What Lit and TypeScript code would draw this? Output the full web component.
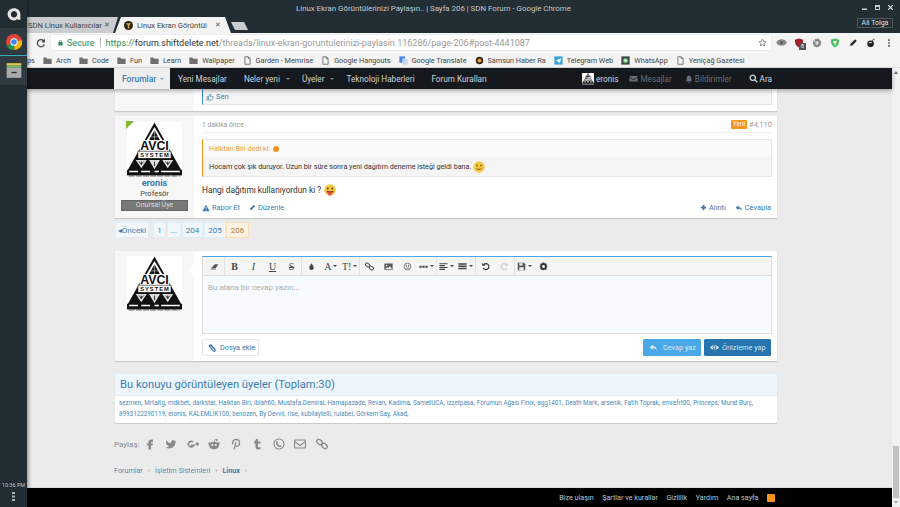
import { LitElement, html, css, svg } from "lit";
import { customElement } from "lit/decorators.js";

const ic = (d: any, size = 10, cls = "", vb = "0 0 24 24") =>
  html`<svg class="ic ${cls}" width=${size} height=${size} viewBox=${vb}>${d}</svg>`;

const I = {
  folder: svg`<path fill="#6f6f6f" d="M1 4h8l2 3h12v14H1z"/>`,
  doc: svg`<path fill="none" stroke="#555" stroke-width="2" d="M5 2h9l5 5v15H5zM14 2v5h5"/>`,
  reply: svg`<path fill="currentColor" d="M10 4 2 11l8 7v-4c5 0 8 1 11 6 0-7-4-11-11-12z"/>`,
  plus: svg`<path fill="currentColor" d="M9 3h6v6h6v6h-6v6H9v-6H3V9h6z"/>`,
  warn: svg`<path fill="currentColor" d="M12 2 23 22H1zM11 9v7h2V9zm0 9v2h2v-2z" fill-rule="evenodd"/>`,
  pen: svg`<path fill="currentColor" d="M3 21l1-6L16 3l5 5L9 20z"/>`,
  thumb: svg`<path fill="none" stroke="currentColor" stroke-width="2" d="M3 11h4v10H3zM7 12l5-9c2 0 3 2 2 4l-1 3h7c2 0 2 2 1 3l-2 7c0 1-1 1-2 1H7"/>`,
  clip: svg`<path fill="none" stroke="currentColor" stroke-width="3" d="M7 4l12 13a3 3 0 0 1-5 4L4 9a2 2 0 0 1 3-3l10 11"/>`,
  eye: svg`<path fill="currentColor" fill-rule="evenodd" d="M0 12C6 4 18 4 24 12 18 20 6 20 0 12zm12-5a5 5 0 1 0 .01 0zm0 2.500a2.500 2.500 0 1 1-.01 0z"/>`,
  mail: svg`<path fill="currentColor" d="M1 5h22v3L12 14 1 8zM1 10l11 6 11-6v10H1z"/>`,
  bell: svg`<path fill="currentColor" d="M12 1c1 0 2 1 2 2 4 1 5 4 5 8 0 4 1 6 3 8H2c2-2 3-4 3-8 0-4 1-7 5-8 0-1 1-2 2-2zM9 20h6c0 2-1 3-3 3s-3-1-3-3z"/>`,
  search: svg`<path fill="none" stroke="currentColor" stroke-width="3.4" d="M10 3a7 7 0 1 0 .01 0zM15 15l7 7"/>`,
  chain: svg`<g fill="none" stroke="currentColor" stroke-width="2.6"><rect x="1" y="4" width="12" height="8" rx="4" transform="rotate(40 7 8)"/><rect x="11" y="12" width="12" height="8" rx="4" transform="rotate(40 17 16)"/></g>`,
};

const share = [
  svg`<path fill="currentColor" d="M15 8h3V3h-4c-3 0-5 2-5 5v3H6v4h3v8h5v-8h3l1-4h-4V9c0-.6.4-1 1-1z"/>`,
  svg`<path fill="currentColor" d="M23 5a9 9 0 0 1-3 1 4.5 4.5 0 0 0-7.9 3v1A10.7 10.7 0 0 1 3 5s-4 8 5 12a11.6 11.6 0 0 1-7 2c9 5 20 0 20-11 0-.3 0-.6-.1-.8A7.7 7.7 0 0 0 23 5z"/>`,
  svg`<path fill="none" stroke="currentColor" stroke-width="3.4" d="M13 8a5.6 5.6 0 1 0 1.6 6.5H9M18 12h7M21.500 8.500v7" transform="translate(-1 0)"/>`,
  svg`<g fill="currentColor"><ellipse cx="12" cy="15" rx="10" ry="7.500"/><circle cx="3" cy="11" r="2.500"/><circle cx="21" cy="11" r="2.500"/><circle cx="18" cy="4" r="2"/></g><path stroke="currentColor" stroke-width="1.500" fill="none" d="M12 8l2-5 4 1"/><circle cx="8.500" cy="14" r="2" fill="#ebebeb"/><circle cx="15.500" cy="14" r="2" fill="#ebebeb"/>`,
  svg`<path fill="none" stroke="currentColor" stroke-width="2.600" d="M6 13C3 8 7 3 12 3s8 3 7 8-5 7-7 5M12 8 8 23"/>`,
  svg`<path fill="currentColor" d="M14 2v5h5v4h-5v6c0 2 2 2 5 1v4c-6 2-10 0-10-4v-7H6V8c2-1 3-3 4-6z"/>`,
  svg`<circle cx="12" cy="12" r="10" fill="none" stroke="currentColor" stroke-width="2.200"/><path fill="currentColor" d="M8 7c1-1 2 0 2 2l-1 1c0 2 2 4 4 5l2-1 2 2c0 2-2 2-3 2-4 0-8-4-8-7 0-2 1-4 2-4z"/>`,
  svg`<g fill="none" stroke="currentColor" stroke-width="2.200"><rect x="1" y="4" width="22" height="16" rx="2"/><path d="M1 7l11 8 11-8"/></g>`,
  I.chain,
];

const avatar = (size: number) => html`<svg class="ava" width=${size} height=${size} viewBox="0 0 100 100">
  <rect width="100" height="100" fill="#fff"/>
  <path d="M50 1 100 90H0z" fill="#111"/>
  <path d="M50 9 66 36H34z" fill="#fff"/>
  <path d="M50 15 60 33H40z" fill="#111"/>
  <path d="M50 15V33M44 27H56" stroke="#fff" stroke-width=".9"/>
  <rect x="23" y="33" width="54" height="21" fill="#fff"/>
  <text x="50" y="51" text-anchor="middle" font-family="Liberation Sans" font-weight="700" font-size="24" textLength="52" lengthAdjust="spacingAndGlyphs" fill="#111">AVCI</text>
  <rect x="20" y="53" width="60" height="13" fill="#fff" stroke="#111"/>
  <text x="50" y="63.500" text-anchor="middle" font-family="Liberation Sans" font-weight="700" font-size="10.500" textLength="52" fill="#111">SYSTEM</text>
  <path d="M16 69H36L26 84zM40 69H60L50 86zM64 69H84L74 84z" fill="#ddd"/>
  <path d="M50 72v8M26 72v6M74 72v6M22 72l4 5 4-5M70 72l4 5 4-5" stroke="#111" stroke-width="1.500" fill="none"/>
  <rect x="0" y="87" width="100" height="10" fill="#111"/>
  <path d="M4 90h16M26 90h16M50 90h8M62 90h34" stroke="#fff" stroke-width="2.500"/>
  <path d="M3 98h94" stroke="#666" stroke-width="2" stroke-dasharray="11 2"/>
</svg>`;

const emoji = (size: number, tongue: boolean) => html`<svg class="ic" width=${size} height=${size} viewBox="0 0 24 24">
  <circle cx="12" cy="12" r="11.500" fill="#f6c742"/>
  ${tongue
    ? svg`<circle cx="7.500" cy="9" r="2" fill="#5a3a12"/><circle cx="16.500" cy="9" r="2" fill="#5a3a12"/><path d="M5 14h14c0 3-3 5-7 5s-7-2-7-5z" fill="#7a3a14"/><path d="M8 15h8v4a4 4 0 0 1-8 0z" fill="#e8484f"/>`
    : svg`<circle cx="8" cy="9" r="1.800" fill="#7a5a1a"/><circle cx="16" cy="9" r="1.800" fill="#7a5a1a"/><path d="M7 15c3 2.500 7 2.500 10 0" fill="none" stroke="#7a5a1a" stroke-width="2"/>`}
</svg>`;

const marks: [string, any, string][] = [
  ["ps", null, "b0"],
  ["Arch", I.folder, "b1"],
  ["Code", I.folder, "b1"],
  ["Fun", I.folder, "b1"],
  ["Learn", I.folder, "b1"],
  ["Wallpaper", I.folder, "b1"],
  ["Garden - Memrise", I.doc, "b1"],
  ["Google Hangouts", I.doc, "b1"],
  ["Google Translate", svg`<rect x="1" y="1" width="15" height="17" fill="#4a86e8"/><rect x="9" y="7" width="14" height="16" fill="#c9d6ee"/>`, "b1"],
  ["Samsun Haber Ra", svg`<circle cx="12" cy="12" r="10" fill="#3b2a1a"/><circle cx="12" cy="12" r="5" fill="#e8a33a"/>`, "b1"],
  ["Telegram Web", svg`<rect x="1" y="1" width="22" height="22" fill="#3aa0d8"/><path d="M5 12l14-6-3 13-4-4-2 2v-4z" fill="#fff"/>`, "b1"],
  ["WhatsApp", svg`<rect x="1" y="1" width="22" height="22" fill="#444"/><circle cx="12" cy="12" r="7" fill="#4cc05c"/><circle cx="12" cy="12" r="3.500" fill="#fff"/>`, "b1"],
  ["Yeniçağ Gazetesi", I.doc, "b1"],
];

const sep = { sep: true } as const;
const gl = (c: string, cls = "", caret = false) => ({ c, cls, caret });
const ig = (svgc: any, caret = false, cls = "") => ({ svgc, caret, cls });
const tb: any[] = [
  ig(svg`<path fill="#555" d="M2 17 13 6h9l-7 11zM2 20h13v1H2z"/>`), sep,
  gl("B", "tb"), gl("I", "ti"), gl("U", "tu"), gl("S", "ts"), sep,
  ig(svg`<path fill="#444" d="M12 3c3 5 6 8 6 12a6 6 0 0 1-12 0c0-4 3-7 6-12z"/>`),
  gl("A", "ta", true), gl("T!", "ta", true), sep,
  ig(I.chain),
  ig(svg`<path fill="#555" d="M1 4h22v17H1z"/><circle cx="7" cy="9" r="2" fill="#f3f3f3"/><path fill="#f3f3f3" d="M3 19l6-6 3 3 4-5 6 8z"/>`),
  ig(svg`<circle cx="12" cy="12" r="9" fill="none" stroke="#777" stroke-width="2.500"/><path stroke="#777" stroke-width="2.500" d="M9 7v6M15 7v6M8 16h8"/>`),
  ig(svg`<path fill="#444" d="M1 10h6v5H1zM9 10h6v5H9zM17 10h6v5h-6z"/>`, true), sep,
  ig(svg`<path fill="#444" d="M1 3h22v3H1zM1 8h15v3H1zM1 13h22v3H1zM1 18h15v3H1z"/>`, true),
  ig(svg`<path fill="#444" d="M1 3h22v4H1zM1 9h22v4H1zM1 15h22v4H1z"/>`, true), sep,
  ig(svg`<path fill="none" stroke="#333" stroke-width="3" d="M7 7a8 8 0 1 1-1 9M3 4l3 5 5-2"/>`),
  ig(svg`<path fill="none" stroke="#ccc" stroke-width="3" d="M17 7a8 8 0 1 0 1 9M21 4l-3 5-5-2"/>`), sep,
  ig(svg`<path fill="#555" d="M2 2h16l4 4v16H2z"/><path fill="#eee" d="M6 3h9v6H6zM6 14h12v7H6z"/>`, true),
  ig(svg`<path fill="#333" fill-rule="evenodd" d="M10 1h4l1 3 3-1 3 3-2 3 3 1v4l-3 1 2 3-3 3-3-2-1 3h-4l-1-3-3 2-3-3 2-3-3-1v-4l3-1-2-3 3-3 3 1zm2 7a4 4 0 1 0 .01 0z"/>`),
];

const row1 = ["sezmen","Mrtaltg","mdkbet","darkstar","Halktan Biri","iblah60","Mustafa.Demiral","Hamapazade","Revan","Kadima","SametUCA","izzetpasa","Forumun Ağası Finix","agg1401","Death Mark","arsenik","Fatih Toprak","emrefrt00","Princeps","Murat Burç"];
const row2 = ["8993122290119","eronis","KALEMLİK100","benozen","By Devvil","rise","kubilaytelli","rulabel","Görkem Say","Akad"];

@customElement("app-root")
export class AppRoot extends LitElement {
  static styles = css`
    :host { display: flex; width: 900px; height: 507px; overflow: hidden; font-family: Roboto, "Noto Sans", sans-serif; background: #ebebeb; color: #333; }
    * { box-sizing: border-box; }
    .ic { display: block; flex: none; }

    .dock { width: 27px; flex: none; background: #222d33; display: flex; flex-direction: column; align-items: stretch; position: relative; z-index: 3; box-shadow: 1px 0 4px rgba(0,0,0,.45); }
    .dlogo { height: 28px; display: flex; align-items: center; justify-content: center; }
    .dchrome { height: 28px; background: #2e3a40; border-bottom: 1px solid #3aa9b8; display: flex; align-items: center; justify-content: center; }
    .dfiles { height: 29px; background: #2e3a40; display: flex; align-items: center; justify-content: center; }
    .dspace { flex: 1; }
    .clock { font-size: 5.500px; color: #c4c9cb; text-align: center; white-space: nowrap; height: 10px; line-height: 10px; }
    .ddots { height: 17px; display: flex; justify-content: center; padding-top: 2px; }

    .win { flex: 1; min-width: 0; display: flex; flex-direction: column; }
    .title { height: 33px; flex: none; background: #232e34; color: #c4c9cb; position: relative; }
    .trow { height: 17px; display: flex; font-size: 7.850px; align-items: center; padding-left: 269px; white-space: nowrap; }
    .wbtns { position: absolute; right: 7px; top: 5px; display: flex; gap: 8px; align-items: center; }
    .user { position: absolute; right: 7px; top: 18px; height: 10px; width: 36px; border: 1px solid #53595d; font-size: 7px; line-height: 8px; text-align: center; color: #dfe2e3; border-radius: 1px; }
    .tabs { height: 16px; display: flex; align-items: flex-end; }
    .tab { height: 16px; display: flex; align-items: center; font-size: 7.600px; white-space: nowrap; }
    .tab1 { width: 92px; background: #c9cdcf; color: #444; padding-left: 1px; clip-path: polygon(0 0, 91px 0, 86px 100%, 0 100%); }
    .tab2 { width: 116px; margin-left: -4px; background: #f4f4f4; color: #444; padding-left: 9px; clip-path: polygon(6px 0, 110px 0, 116px 100%, 0 100%); }
    .x { font-size: 7px; color: #555; margin-left: auto; }
    .tab1 .x { margin-right: 9px; }
    .tab2 .x { margin-right: 10px; }
    .favi { margin-right: 4px; }
    .newtab { width: 17px; height: 8px; margin-bottom: 3px; background: #c9cdcf; clip-path: polygon(0 0, 13px 0, 17px 100%, 4px 100%); }

    .tool { height: 19px; flex: none; background: #f4f4f4; display: flex; align-items: center; padding-left: 9px; }
    .omni { width: 720px; height: 15px; margin-left: 5px; background: #fff; box-shadow: 0 0 1px rgba(0,0,0,.3); border-radius: 1px; display: flex; align-items: center; padding-left: 6px; font-size: 9px; white-space: nowrap; position: relative; }
    .sec { color: #2e8b57; margin-left: 3px; }
    .bar { width: 1px; height: 9px; background: #bbb; margin: 0 5px; }
    .https { color: #2e8b57; }
    .dom { color: #333; }
    .rest { color: #9a9a9a; }
    .star { margin-left: auto; margin-right: 4px; color: #666; }
    .exts { display: flex; align-items: center; margin-left: 1px; }
    .ext { width: 18px; display: flex; justify-content: center; position: relative; }
    .badge8 { position: absolute; left: 9px; top: 5px; width: 7px; height: 7px; background: #555; color: #fff; font-size: 5px; line-height: 7px; text-align: center; }

    .marks { height: 16px; flex: none; background: #f4f4f4; display: flex; align-items: center; font-size: 7.300px; color: #444; white-space: nowrap; overflow: hidden; box-shadow: inset 0 -1px 0 #ddd; }
    .b { display: flex; align-items: center; gap: 4px; }
    .b0 { width: 16px; }
    .b1 { margin-right: 8px; }

    .view { flex: 1; min-height: 0; display: flex; }
    .col { flex: 1; min-width: 0; display: flex; flex-direction: column; }
    .scroll { width: 8px; flex: none; background: #f1f1f1; display: flex; flex-direction: column; align-items: center; }
    .up, .dn { width: 0; height: 0; border-left: 2.500px solid transparent; border-right: 2.500px solid transparent; flex: none; }
    .up { border-bottom: 3px solid #666; margin-top: 3px; }
    .dn { border-top: 3px solid #aaa; margin-bottom: 3px; }
    .track { flex: 1; width: 100%; padding-top: 372px; display: flex; }
    .thumb { width: 6px; margin-left: 1px; height: 52px; background: #c1c1c1; }

    nav { height: 21px; flex: none; background: #15181d; display: flex; align-items: center; font-size: 8.200px; color: #cfd6dc; white-space: nowrap; padding-left: 87px; position: relative; z-index: 2; box-shadow: 0 2px 4px rgba(0,0,0,.3); }
    .fm { height: 21px; width: 56px; background: #eeeeee; color: #3b7cb1; display: flex; align-items: center; padding-left: 8px; font-weight: 500; margin-right: 8px; font-size: 8.500px; }
    .fm i { margin-left: 4px; color: #7aa6c8; }
    .caret { display: inline-block; width: 0; height: 0; border-left: 2.500px solid transparent; border-right: 2.500px solid transparent; border-top: 2.500px solid currentColor; }
    .navc { color: #7a8288; margin-left: 6px; }
    .ni { display: flex; align-items: center; }
    .ni.a { margin-right: 17px; }
    .ni.c { margin-right: 12px; }
    .nr { margin-left: auto; margin-right: 120px; display: flex; align-items: center; }
    .nr .g { color: #66707a; gap: 2px; }
    .nava { margin-right: 2px; }

    .page { flex: 1; min-height: 0; padding-left: 88px; width: 751px; display: flex; flex-direction: column; overflow: hidden; font-size: 8px; }
    .card { background: #fff; width: 662px; display: flex; box-shadow: 0 1px 1px rgba(0,0,0,.15); flex: none; position: relative; }
    .uc { width: 79px; flex: none; background: #f7f7f7; display: flex; flex-direction: column; align-items: center; }
    .mc { flex: 1; min-width: 0; padding: 0 5px 0 8px; }
    .notch::before { content: ""; position: absolute; left: 73px; top: 13px; width: 0; height: 0; border: 6px solid transparent; border-left-width: 0; border-right-color: #fff; }

    .top { height: 22px; }
    .likes { height: 16px; background: #f5f5f5; border: 1px solid #e4e4e4; border-left: 1.500px solid #3b8fd6; border-top: 0; display: flex; align-items: center; gap: 2px; padding: 0 0 0 3px; font-size: 7.500px; color: #3b7cb1; }

    .post { height: 102px; margin-top: 5px; }
    .ava { display: block; }
    .post .uc { padding-top: 6px; position: relative; }
    .online { position: absolute; left: 11px; top: 5px; width: 0; height: 0; border-top: 8px solid #7fb52c; border-right: 8px solid transparent; }
    .uname { color: #3b7cb1; font-weight: 700; font-size: 9.200px; line-height: 11px; }
    .utitle { font-size: 7.500px; line-height: 11px; color: #444; }
    .banner { width: 67px; height: 11px; background: #777; border: 1px solid #666; color: #ddd; font-size: 7px; line-height: 9px; text-align: center; margin-top: 1px; }
    .meta { height: 17px; border-bottom: 1px solid #eee; display: flex; align-items: center; font-size: 6.800px; color: #999; padding-top: 1px; }
    .num { font-size: 7.500px; }
    .new { margin-left: auto; width: 16px; height: 9px; line-height: 9px; background: #f7941d; color: #fff; text-align: center; border-radius: 1px; font-size: 6.500px; margin-right: 2px; }
    .qt { margin-top: 6px; height: 38px; background: #f5f5f5; border: 1px solid #e6e6e6; border-left: 1.500px solid #f7941d; font-size: 7.200px; display: flex; flex-direction: column; }
    .qh { height: 17px; background: #fafafa; color: #f5a03c; display: flex; align-items: center; gap: 3px; padding-left: 6px; }
    .qdot { width: 6px; height: 6px; border-radius: 50%; background: #f7941d; }
    .qb { flex: 1; display: flex; align-items: center; gap: 2px; padding-left: 6px; color: #333; }
    .msg { height: 26px; display: flex; align-items: center; gap: 3px; font-size: 8.300px; color: #333; }
    .acts { display: flex; align-items: center; font-size: 7.400px; color: #3b7cb1; }
    .act { display: flex; align-items: center; gap: 2px; margin-right: 9px; }
    .acts .ml { margin-left: auto; }
    .acts .last { margin-right: 1px; }

    .pager { display: flex; height: 16px; margin-top: 4px; flex: none; font-size: 8px; color: #3b7cb1; }
    .pg { background: #f2f7fc; border: 1px solid #e3edf6; display: flex; align-items: center; justify-content: center; height: 16px; margin-right: 1px; }
    .pg.cur { background: #fdf1e0; border-color: #f8dcb3; color: #b07a3a; margin-left: -1px; }

    .reply { height: 110px; margin-top: 13px; }
    .reply .uc { padding-top: 5px; }
    .editor { margin-top: 5px; height: 78px; border: 1px solid #ddd; border-top: 1.500px solid #4aa7e8; display: flex; flex-direction: column; }
    .etool { height: 19px; background: #f5f5f5; border-bottom: 1px solid #ddd; display: flex; padding-left: 2px; flex: none; }
    .cell { width: 19px; display: flex; align-items: center; justify-content: center; gap: 1.500px; color: #444; font-family: "Liberation Serif", serif; font-size: 10px; }
    .tb { font-weight: 700; }
    .ti { font-style: italic; }
    .tu { text-decoration: underline; }
    .ts { text-decoration: line-through; }
    .esep { width: 1px; background: #e2e2e2; flex: none; }
    .ebody { flex: 1; background: #f7fbff; padding: 7px 5px; font-size: 8px; color: #aaa; }
    .foot { display: flex; margin-top: 5px; }
    .btn { height: 17px; display: flex; align-items: center; font-size: 7.300px; border-radius: 1.500px; }
    .attach { width: 57px; background: #fff; border: 1px solid #e2e2e2; color: #3b7cb1; gap: 3px; padding-left: 5px; }
    .b1a { width: 58px; margin-left: auto; background: #4aa7e8; color: #dcedf9; padding-left: 6px; gap: 5px; }
    .b2a { width: 67px; margin-left: 3px; background: #2574ad; color: #d3e3ef; padding-left: 6px; gap: 3px; margin-right: 1px; }

    .view-card { width: 662px; height: 49px; margin-top: 13px; background: #fff; box-shadow: 0 1px 1px rgba(0,0,0,.15); flex: none; border-radius: 1px; }
    .vh { height: 22px; background: #edf5fd; border-bottom: 1px solid #e2edf6; color: #3b7cb1; font-size: 11.200px; display: flex; align-items: center; padding-left: 5px; white-space: nowrap; }
    .vb { padding: 2px 4px; font-size: 6.300px; line-height: 11px; color: #555; white-space: nowrap; }
    .vrow { display: flex; gap: 2px; }
    .vb span { color: #4a8abb; }

    .sh { display: flex; align-items: center; height: 14px; margin-top: 14px; margin-left: -1px; color: #8a8a8a; font-size: 8px; flex: none; }
    .sh .lbl { margin-right: 1px; width: 24px; }
    .sh .si { width: 21.500px; display: flex; justify-content: center; }
    .crumbs { display: flex; align-items: center; gap: 5px; margin-top: 13px; margin-left: -1px; font-size: 7.200px; color: #5a8db5; height: 12px; flex: none; }
    .crumbs b { color: #3b7cb1; }
    .crumbs i { font-style: normal; color: #999; }

    footer { height: 20px; flex: none; background: #000; border-top: 1px solid #ddd; display: flex; align-items: center; justify-content: flex-end; gap: 8.500px; padding-right: 117px; color: #b9c7d2; font-size: 7.200px; white-space: nowrap; }
    .rss { width: 8px; height: 8px; background: #f7941d; border-radius: 1px; }
  `;

  render() {
    return html`
      <aside class="dock">
        <div class="dlogo">
          <svg class="ic" width="14" height="14" viewBox="0 0 24 24"><path fill="#e8e8e8" fill-rule="evenodd" d="M12 2c6 0 11 4 11 10v10h-5v-2c-2 2-4 3-6 3-6 0-11-5-11-11S6 2 12 2zm0 5a5.500 5.500 0 1 0 .01 0z"/></svg>
        </div>
        <div class="dchrome">
          <svg class="ic" width="16" height="16" viewBox="0 0 24 24"><circle cx="12" cy="12" r="12" fill="#db4437"/><path d="M12 12 1.500 18A12 12 0 0 0 13 24z" fill="#0f9d58"/><path d="M12 12 24 9a12 12 0 0 1-11 15z" fill="#f4b400"/><circle cx="12" cy="12" r="5.500" fill="#fff"/><circle cx="12" cy="12" r="4.200" fill="#4285f4"/></svg>
        </div>
        <div class="dfiles">
          <svg class="ic" width="16" height="17" viewBox="0 0 24 24"><rect x="1" y="1" width="22" height="3" fill="#e9c94a"/><rect x="1" y="4" width="22" height="4" fill="#7cb86a"/><rect x="1" y="8" width="22" height="15" fill="#aaa"/><rect x="8" y="14" width="8" height="2" fill="#333"/></svg>
        </div>
        <div class="dspace"></div>
        <div class="clock">10:36 PM</div>
        <div class="ddots"><svg class="ic" width="3" height="9" viewBox="0 0 3 9"><path fill="#a8aeb1" d="M0 0h3v2H0zM0 3.500h3v2H0zM0 7h3v2H0z"/></svg></div>
      </aside>

      <div class="win">
        <div class="title">
          <div class="trow">Linux Ekran Görüntülerinizi Paylaşın.. | Sayfa 206 | SDN Forum - Google Chrome</div>
          <div class="wbtns">
            <svg class="ic" width="5" height="5" viewBox="0 0 5 5"><rect y="3.500" width="5" height="1.500" fill="#ccc"/></svg>
            <svg class="ic" width="5" height="5" viewBox="0 0 5 5"><path fill="#ccc" d="M0 0h5v5H0zM1 2v2h3V2z" fill-rule="evenodd"/></svg>
            <svg class="ic" width="5" height="5" viewBox="0 0 5 5"><path stroke="#ddd" stroke-width="1.200" d="M0 0l5 5M5 0 0 5"/></svg>
          </div>
          <div class="user">Ali Tolga</div>
          <div class="tabs">
            <div class="tab tab1"><span>SDN Linux Kullanıcılar</span><span class="x">✕</span></div>
            <div class="tab tab2">
              <svg class="ic favi" width="9" height="9" viewBox="0 0 24 24"><circle cx="12" cy="12" r="12" fill="#2b2416"/><path d="M5 6h14l-5 5v9h-4v-9z" fill="#d9a93a"/></svg>
              <span>Linux Ekran Görüntül</span><span class="x">✕</span>
            </div>
            <div class="newtab"></div>
          </div>
        </div>

        <div class="tool">
          ${ic(svg`<path fill="none" stroke="#444" stroke-width="3" d="M19 8a8.500 8.500 0 1 0 1 7M20 3v6h-6"/>`, 10)}
          <div class="omni">
            ${ic(svg`<path fill="#2e8b57" d="M5 10h14v12H5zM8 10V7a4 4 0 0 1 8 0v3h-2V7a2 2 0 0 0-4 0v3z"/>`, 7)}
            <span class="sec">Secure</span><span class="bar"></span>
            <span class="https">https://</span><span class="dom">forum.shiftdelete.net</span><span class="rest">/threads/linux-ekran-goruntulerinizi-paylasin.116286/page-206#post-4441087</span>
            <span class="star">${ic(svg`<path fill="none" stroke="currentColor" stroke-width="2" d="M12 3l3 6 6 1-4.500 4.500 1 6.500-5.500-3-5.500 3 1-6.500L3 10l6-1z"/>`, 9)}</span>
          </div>
          <div class="exts">
            <div class="ext">${ic(svg`<ellipse cx="12" cy="12" rx="11" ry="7" fill="#888"/><circle cx="12" cy="12" r="3" fill="#555"/>`, 11)}</div>
            <div class="ext">${ic(svg`<path d="M12 1 22 4c0 10-3 15-10 19C5 19 2 14 2 4z" fill="#a3202a"/>`, 10)}<span class="badge8">8</span></div>
            <div class="ext">${ic(svg`<circle cx="12" cy="12" r="10" fill="#888"/><circle cx="12" cy="12" r="4" fill="#ddd"/><circle cx="6" cy="8" r="2" fill="#ddd"/>`, 10)}</div>
            <div class="ext">${ic(svg`<path d="M12 1 22 4c0 10-3 15-10 19C5 19 2 14 2 4z" fill="#4cc05c"/><path d="M8 7h8v4l-3 2v4h-2v-4L8 11z" fill="#fff"/>`, 10)}</div>
            <div class="ext">${ic(svg`<path fill="#333" d="M3 21l1-6L16 3l5 5L9 20z"/>`, 9)}</div>
            <div class="ext">${ic(svg`<circle cx="11" cy="14" r="8" fill="#222"/><path d="M14 7l4-4 3 2" fill="none" stroke="#222" stroke-width="2"/><path d="M7 11h7" stroke="#fff" stroke-width="2"/>`, 10)}</div>
            <div class="ext">${ic(svg`<path fill="#555" d="M10 3h4v4h-4zM10 10h4v4h-4zM10 17h4v4h-4z"/>`, 10)}</div>
          </div>
        </div>

        <div class="marks">
          ${marks.map(([t, i, c]) => html`<div class="b ${c}">${i ? ic(i, 9) : ""}<span>${t}</span></div>`)}
        </div>

        <div class="view">
          <div class="col">
            <nav>
              <div class="fm">Forumlar<i class="caret"></i></div>
              <div class="ni a">Yeni Mesajlar</div>
              <div class="ni c">Neler yeni<i class="caret navc"></i></div>
              <div class="ni c">Üyeler<i class="caret navc"></i></div>
              <div class="ni a">Teknoloji Haberleri</div>
              <div class="ni">Forum Kuralları</div>
              <div class="nr">
                <span class="nava">${avatar(12)}</span>
                <div class="ni" style="margin-right:11px">eronis</div>
                <div class="ni g" style="margin-right:13px">${ic(I.mail, 9)}Mesajlar</div>
                <div class="ni g" style="margin-right:17px">${ic(I.bell, 8)}Bildirimler</div>
                <div class="ni" style="gap:2px;color:#c5d8e8">${ic(I.search, 9)}Ara</div>
              </div>
            </nav>

            <main class="page">
              <section class="card top">
                <div class="uc"></div>
                <div class="mc"><div class="likes">${ic(I.thumb, 8)}Sen</div></div>
              </section>

              <article class="card post notch">
                <div class="uc">
                  <i class="online"></i>
                  ${avatar(55)}
                  <div class="uname">eronis</div>
                  <div class="utitle">Profesör</div>
                  <div class="banner">Onursal Üye</div>
                </div>
                <div class="mc">
                  <div class="meta">1 dakika önce<span class="new">Yeni</span><span class="num">#4,110</span></div>
                  <div class="qt">
                    <div class="qh">Halktan Biri dedi ki:<i class="qdot"></i></div>
                    <div class="qb">Hocam çok şık duruyor. Uzun bir süre sonra yeni dağıtım deneme isteği geldi bana. ${emoji(12, false)}</div>
                  </div>
                  <div class="msg">Hangi dağıtımı kullanıyordun ki ? ${emoji(12, true)}</div>
                  <div class="acts">
                    <div class="act">${ic(I.warn, 8)}Rapor Et</div>
                    <div class="act">${ic(I.pen, 7)}Düzenle</div>
                    <div class="act ml">${ic(I.plus, 7)}Alıntı</div>
                    <div class="act last">${ic(I.reply, 8)}Cevapla</div>
                  </div>
                </div>
              </article>

              <div class="pager">
                <div class="pg" style="width:34px;margin-right:4px">◂Önceki</div>
                <div class="pg" style="width:13px">1</div>
                <div class="pg" style="width:14px">...</div>
                <div class="pg" style="width:21px">204</div>
                <div class="pg" style="width:22px">205</div>
                <div class="pg cur" style="width:23px">206</div>
              </div>

              <section class="card reply notch">
                <div class="uc">${avatar(55)}</div>
                <div class="mc">
                  <div class="editor">
                    <div class="etool">
                      ${tb.map((t) =>
                        t.sep
                          ? html`<span class="esep"></span>`
                          : html`<span class="cell ${t.cls}">${t.svgc ? ic(t.svgc, 9) : t.c}${t.caret ? html`<i class="caret"></i>` : ""}</span>`
                      )}
                    </div>
                    <div class="ebody">Bu alana bir cevap yazın...</div>
                  </div>
                  <div class="foot">
                    <div class="btn attach">${ic(I.clip, 9)}Dosya ekle</div>
                    <div class="btn b1a">${ic(I.reply, 9)}Cevap yaz</div>
                    <div class="btn b2a">${ic(I.eye, 9)}Önizleme yap</div>
                  </div>
                </div>
              </section>

              <section class="view-card">
                <div class="vh">Bu konuyu görüntüleyen üyeler (Toplam:30)</div>
                <div class="vb">
                  <div class="vrow">${row1.map((v) => html`<div><span>${v}</span>,</div>`)}</div>
                  <div class="vrow">${row2.map((v) => html`<div><span>${v}</span>,</div>`)}</div>
                </div>
              </section>

              <div class="sh">
                <span class="lbl">Paylaş:</span>
                ${share.map((s) => html`<span class="si">${ic(s, 12)}</span>`)}
              </div>

              <div class="crumbs">Forumlar <i>›</i> İşletim Sistemleri <i>›</i> <b>Linux</b> <i>›</i></div>
            </main>

            <footer>
              <span>Bize ulaşın</span><span>Şartlar ve kurallar</span><span>Gizlilik</span><span>Yardım</span><span>Ana sayfa</span><span class="rss"></span>
            </footer>
          </div>
          <div class="scroll">
            <i class="up"></i>
            <div class="track"><div class="thumb"></div></div>
            <i class="dn"></i>
          </div>
        </div>
      </div>
    `;
  }
}
